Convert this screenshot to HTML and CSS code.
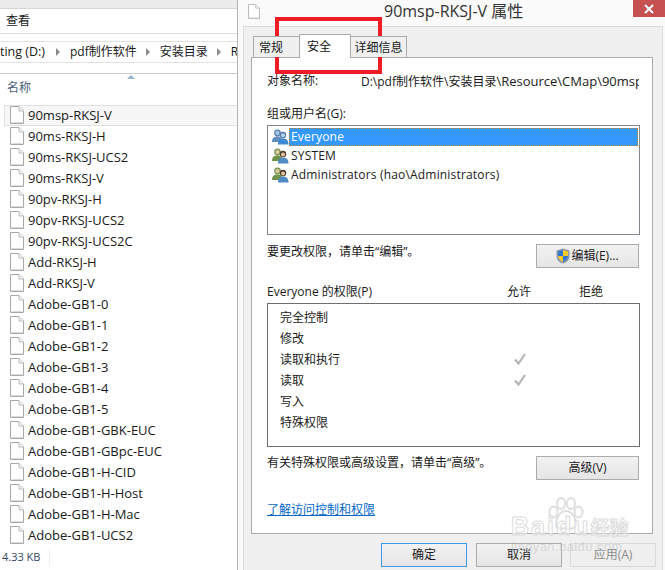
FILE: index.html
```html
<!DOCTYPE html>
<html lang="zh">
<head>
<meta charset="utf-8">
<title>90msp-RKSJ-V 属性</title>
<link rel="stylesheet" href="styles.css">
</head>
<body>
<svg class="defs" width="0" height="0">
  <symbol id="file" viewBox="0 0 14 18"><path d="M.5.5h8.5l4.500 4.500v12.500h-13z" fill="#fff" stroke="#a8a8a8"/><path d="M9 .5v4.500h4.500" fill="#f2f2f2" stroke="#bdbdbd"/><path d="M1.500 16.500h11" stroke="#dcdcdc"/></symbol>
  <symbol id="blueusers" viewBox="0 0 17 16"><circle cx="5.500" cy="4" r="3.400" fill="#5f87b3"/><circle cx="5.500" cy="4" r="2" fill="#a9c6e2"/><path d="M0 13c0-4 2-5.500 5.500-5.500S10 9 10 13z" fill="#5f8dbf"/><circle cx="11" cy="6" r="3.200" fill="#4f7aa8"/><circle cx="11" cy="6.300" r="2" fill="#b9d3ea"/><path d="M6 15.500c0-4 1.500-6 5-6s5.500 2 5.500 6z" fill="#3f8ad2"/></symbol>
  <symbol id="users" viewBox="0 0 17 16"><circle cx="5.500" cy="4" r="3.400" fill="#7d9a5a"/><circle cx="5.500" cy="4" r="2" fill="#e6c9a0"/><path d="M0 13c0-4 2-5.500 5.500-5.500S10 9 10 13z" fill="#6f9148"/><circle cx="11" cy="6" r="3.200" fill="#4a3d30"/><circle cx="11" cy="6.500" r="2" fill="#e8c49a"/><path d="M6 15.500c0-4 1.500-6 5-6s5.500 2 5.500 6z" fill="#4f8cc4"/></symbol>
  <symbol id="shield" viewBox="0 0 14 16"><path d="M7 .5 13.500 2.500v5.500c0 4-3 6.500-6.500 7.500C3.500 14.500.5 12 .5 8V2.500z" fill="#8a97a8"/><path d="M7 2 7 8H2V3.500z" fill="#2f78d0"/><path d="M7 2l5 1.500V8H7z" fill="#f5c92a"/><path d="M2 8h5v6C4.500 13 2.500 11 2 8z" fill="#f5c92a"/><path d="M7 8h5c-.5 3-2.500 5-5 6z" fill="#2f78d0"/></symbol>
</svg>
<main class="desktop">
  <section class="explorer">
    <div class="ribbon-top"></div>
    <div class="ribbon-tab">查看</div>
    <div class="gap-a"></div>
    <nav class="crumbs">
      <span class="crumb c1">ting (D:)</span><i class="arrow"></i>
      <span class="crumb">pdf制作软件</span><i class="arrow"></i>
      <span class="crumb">安装目录</span><i class="arrow"></i>
      <span class="crumb">R</span>
    </nav>
    <div class="gap-b"></div>
    <div class="col-head"><i class="sort"></i><span>名称</span></div>
    <ul class="files">
      <li class="file sel"><svg class="ficon"><use href="#file"/></svg>90msp-RKSJ-V</li>
      <li class="file"><svg class="ficon"><use href="#file"/></svg>90ms-RKSJ-H</li>
      <li class="file"><svg class="ficon"><use href="#file"/></svg>90ms-RKSJ-UCS2</li>
      <li class="file"><svg class="ficon"><use href="#file"/></svg>90ms-RKSJ-V</li>
      <li class="file"><svg class="ficon"><use href="#file"/></svg>90pv-RKSJ-H</li>
      <li class="file"><svg class="ficon"><use href="#file"/></svg>90pv-RKSJ-UCS2</li>
      <li class="file"><svg class="ficon"><use href="#file"/></svg>90pv-RKSJ-UCS2C</li>
      <li class="file"><svg class="ficon"><use href="#file"/></svg>Add-RKSJ-H</li>
      <li class="file"><svg class="ficon"><use href="#file"/></svg>Add-RKSJ-V</li>
      <li class="file"><svg class="ficon"><use href="#file"/></svg>Adobe-GB1-0</li>
      <li class="file"><svg class="ficon"><use href="#file"/></svg>Adobe-GB1-1</li>
      <li class="file"><svg class="ficon"><use href="#file"/></svg>Adobe-GB1-2</li>
      <li class="file"><svg class="ficon"><use href="#file"/></svg>Adobe-GB1-3</li>
      <li class="file"><svg class="ficon"><use href="#file"/></svg>Adobe-GB1-4</li>
      <li class="file"><svg class="ficon"><use href="#file"/></svg>Adobe-GB1-5</li>
      <li class="file"><svg class="ficon"><use href="#file"/></svg>Adobe-GB1-GBK-EUC</li>
      <li class="file"><svg class="ficon"><use href="#file"/></svg>Adobe-GB1-GBpc-EUC</li>
      <li class="file"><svg class="ficon"><use href="#file"/></svg>Adobe-GB1-H-CID</li>
      <li class="file"><svg class="ficon"><use href="#file"/></svg>Adobe-GB1-H-Host</li>
      <li class="file"><svg class="ficon"><use href="#file"/></svg>Adobe-GB1-H-Mac</li>
      <li class="file"><svg class="ficon"><use href="#file"/></svg>Adobe-GB1-UCS2</li>
    </ul>
    <footer class="status"><span class="size">4.33 KB</span></footer>
  </section>

  <section class="dialog">
    <header class="titlebar">
      <svg class="title-icon"><use href="#file"/></svg>
      <h1 class="title">90msp-RKSJ-V 属性</h1>
      <div class="close"><svg width="10" height="10" viewBox="0 0 10 10"><path d="M1 1l8 8M9 1l-8 8" stroke="#fff" stroke-width="2"/></svg></div>
    </header>
    <div class="client">
      <div class="tabs">
        <div class="tab t1">常规</div>
        <div class="tab active">安全</div>
        <div class="tab t3">详细信息</div>
      </div>
      <div class="panel">
        <div class="objrow"><span class="objlabel">对象名称:</span><span class="objpath">D:\pdf制作软件\安装目录<span class="latin">\Resource\CMap\90msp-RKSJ-V</span></span></div>
        <div class="grouplabel">组或用户名(G):</div>
        <div class="listbox">
          <div class="user selected"><svg class="uicon"><use href="#blueusers"/></svg><span class="uname">Everyone</span></div>
          <div class="user"><svg class="uicon"><use href="#users"/></svg><span class="uname">SYSTEM</span></div>
          <div class="user"><svg class="uicon"><use href="#users"/></svg><span class="uname">Administrators (hao\Administrators)</span></div>
        </div>
        <div class="actionrow a-edit">
          <span class="hint">要更改权限，请单击“编辑”。</span>
          <button class="btn action"><svg class="shield"><use href="#shield"/></svg>编辑(E)...</button>
        </div>
        <div class="permhead"><span class="permtitle">Everyone 的权限(P)</span><span class="allow">允许</span><span class="deny">拒绝</span></div>
        <div class="permbox">
          <div class="perm">完全控制</div>
          <div class="perm">修改</div>
          <div class="perm"><span>读取和执行</span><svg class="check" width="14" height="14" viewBox="0 0 14 14"><path d="M2 7.500l3.500 4L12 2" fill="none" stroke="#b4b4b4" stroke-width="2.200"/></svg></div>
          <div class="perm"><span>读取</span><svg class="check" width="14" height="14" viewBox="0 0 14 14"><path d="M2 7.500l3.500 4L12 2" fill="none" stroke="#b4b4b4" stroke-width="2.200"/></svg></div>
          <div class="perm">写入</div>
          <div class="perm">特殊权限</div>
        </div>
        <div class="actionrow a-adv">
          <span class="hint hint-up">有关特殊权限或高级设置，请单击“高级”。</span>
          <button class="btn action">高级(V)</button>
        </div>
        <a class="learn" href="#">了解访问控制和权限</a>
      </div>
      <div class="footer">
        <button class="btn foot primary">确定</button>
        <button class="btn foot">取消</button>
        <button class="btn foot disabled">应用(A)</button>
      </div>
    </div>
  </section>
</main>
<div class="redbox"></div>
<div class="watermark">
  <svg class="paw" width="36" height="35" viewBox="0 0 36 35"><g fill="rgba(255,255,255,.5)" stroke="#dedede" stroke-width="2"><ellipse cx="5.500" cy="15" rx="4" ry="5.500"/><ellipse cx="13" cy="6.500" rx="4" ry="5.500"/><ellipse cx="23" cy="6.500" rx="4" ry="5.500"/><ellipse cx="30.500" cy="15" rx="4" ry="5.500"/><path d="M18 14c6 0 10 7 10 13 0 5-5 5-10 4-5 1-10 1-10-4 0-6 4-13 10-13z"/></g></svg>
  <div class="wm-main">Baidu<span class="wm-cn">经验</span></div>
  <div class="wm-sub">jingyan.baidu.com</div>
</div>
</body>
</html>
```
FILE: styles.css
```css
* { box-sizing: border-box; }
html, body { margin: 0; padding: 0; }
body { width: 665px; height: 570px; overflow: hidden; position: relative; background: #fff; color: #1a1a1a; font: 12px/16px "Open Sans", "Noto Sans CJK SC", sans-serif; }
.defs { position: absolute; }
.desktop { display: flex; height: 570px; }

.explorer { width: 237px; flex: none; display: flex; flex-direction: column; overflow: hidden; background: #fff; }
.ribbon-top { height: 9px; background: #ebebeb; border-bottom: 1px solid #d6d6d6; }
.ribbon-tab { height: 25px; padding: 4px 0 0 6px; border-bottom: 1px solid #dadada; font-size: 12px; line-height: 16px; }
.gap-a { height: 7px; background: #fff; }
.crumbs { height: 22px; display: flex; align-items: center; white-space: nowrap; border-top: 1px solid #e2e2e2; border-bottom: 1px solid #e2e2e2; font-size: 12px; }
.crumb { flex: none; }
.c1 { width: 56px; font-size: 12.500px; }
.arrow { flex: none; width: 0; height: 0; margin: 0 10px 0 9px; border-left: 4px solid #8a8a8a; border-top: 4px solid transparent; border-bottom: 4px solid transparent; }
.c1 + .arrow { margin-left: 0; }
.gap-b { height: 11px; border-bottom: 1px solid #c8c8c8; }
.col-head { height: 31px; position: relative; padding: 6px 0 0 7px; color: #4c607a; }
.sort { position: absolute; left: 127px; top: 1px; width: 0; height: 0; border-left: 4px solid transparent; border-right: 4px solid transparent; border-bottom: 4px solid #8fb4cf; }
.files { list-style: none; margin: 0; padding: 0; flex: 1; font-size: 13px; }
.file { height: 21px; display: flex; align-items: center; padding: 0 0 1px 10px; line-height: 20px; white-space: nowrap; }
.sel { margin-left: 4px; padding-left: 5px; background: #f7f7f7; border: 1px solid #e0e0e0; border-right: 0; }
.ficon { width: 14px; height: 18px; margin-right: 4px; flex: none; }
.status { height: 24px; padding: 3px 0 0 2px; font-size: 11px; color: #33475f; }
.size { display: inline-block; width: 48px; border-right: 1px solid #ececec; }

.dialog { width: 428px; flex: none; display: flex; flex-direction: column; background: #fafafa; border-left: 1px solid #b5b5b5; }
.titlebar { height: 26px; flex: none; display: flex; position: relative; }
.title-icon { width: 12px; height: 15px; margin: 4px 0 0 10px; flex: none; }
.title { margin: 0 0 0 124px; font-size: 16px; font-weight: 400; line-height: 22px; white-space: nowrap; color: #333; }
.close { position: absolute; right: 0; top: 0; width: 32px; height: 17px; background: #c75050; display: flex; align-items: center; justify-content: center; }
.client { flex: 1; margin: 0 2px 0 5px; background: #f0f0f0; border: 1px solid #dcdcdc; border-bottom: 0; padding: 0 9px 0 7px; display: flex; flex-direction: column; }

.tabs { display: flex; height: 30px; padding: 9px 0 0 2px; position: relative; z-index: 1; align-items: flex-end; }
.tab { height: 21px; background: #f0f0f0; border: 1px solid #ababab; border-bottom: 0; text-align: center; line-height: 17px; padding-top: 2px; }
.t1 { width: 47px; text-align: left; padding-left: 5px; }
.t3 { width: 57px; margin-left: -1px; }
.active { width: 52px; height: 24px; margin-left: -1px; background: #fff; margin-bottom: -1px; position: relative; z-index: 1; line-height: 18px; color: #111; text-align: left; padding: 3px 0 0 7px; }

.panel { height: 477px; flex: none; background: #fff; border: 1px solid #ababab; padding: 15px 13px 0 15px; }
.objrow { display: flex; height: 16px; overflow: hidden; white-space: nowrap; }
.objlabel { width: 94px; flex: none; }
.objpath { width: 279px; flex: none; overflow: hidden; }
.latin { font-size: 13px; }
.grouplabel { margin-top: 17px; height: 16px; }
.listbox { margin-top: 3px; width: 373px; height: 110px; border: 1px solid #82878f; padding: 2px 1px 1px; }
.user { height: 18.700px; display: flex; align-items: center; padding-left: 3px; }
.uicon { width: 17px; height: 16px; flex: none; }
.uname { flex: 1; padding-left: 2px; line-height: 18px; white-space: nowrap; letter-spacing: .18px; }
.selected .uname { background: #3399ff; color: #fff; outline: 1px dotted #c8832c; outline-offset: -1px; }

.actionrow { display: flex; justify-content: space-between; width: 372px; }
.a-edit { margin-top: 9px; height: 24px; }
.a-adv { margin-top: 9px; height: 24px; }
.hint { line-height: 16px; }
.hint-up { margin-top: -1px; }
.btn { font: inherit; color: #1a1a1a; padding: 0; background: linear-gradient(#f2f2f2, #e5e5e5); border: 1px solid #acacac; display: flex; align-items: center; justify-content: center; }
.action { width: 103px; height: 24px; }
.shield { width: 14px; height: 16px; margin-right: 1px; }

.permhead { position: relative; margin-top: 16px; height: 16px; }
.allow { position: absolute; left: 240px; }
.deny { position: absolute; left: 312px; }
.permbox { margin-top: 3px; width: 373px; height: 144px; border: 1px solid #6f6f6f; padding: 3px 0 0 12px; }
.perm { height: 21px; line-height: 21px; position: relative; }
.check { position: absolute; left: 233px; top: 3px; }

.learn { display: block; margin-top: 22px; color: #0066cc; line-height: 16px; width: 108px; white-space: nowrap; }

.footer { display: flex; gap: 9px; padding: 9px 0 0 130px; }
.foot { width: 86px; height: 24px; flex: none; }
.primary { border: 1px solid #3c9ae8; }
.disabled { background: #efefef; border-color: #d9d9d9; color: #8a8a8a; margin-left: -1px; }

.redbox { position: absolute; left: 275px; top: 17px; width: 107px; height: 57px; border: 4px solid #ee1c25; }

.watermark { position: absolute; left: 511px; top: 497px; width: 116px; pointer-events: none; }
.paw { display: block; margin: 0 0 -19px 37px; }
.wm-main { font: 700 25px/26px "Liberation Sans", sans-serif; color: rgba(255,255,255,.55); -webkit-text-stroke: 1px #dcdcdc; white-space: nowrap; letter-spacing: 2px; }
.wm-cn { font: 700 19px/26px "Noto Sans CJK SC", sans-serif; letter-spacing: 0; }
.wm-sub { font: 13px/14px "Liberation Sans", sans-serif; color: rgba(190,190,190,.5); margin-top: 0; letter-spacing: .4px; white-space: nowrap; }
```
